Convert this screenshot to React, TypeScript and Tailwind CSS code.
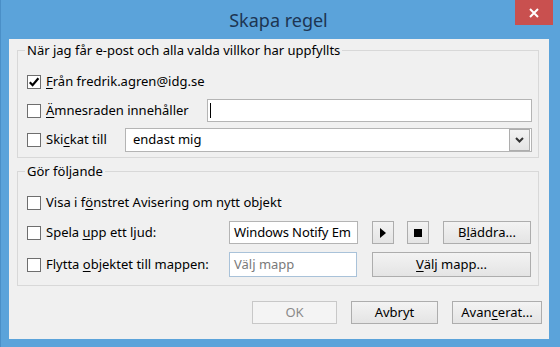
const U = ({ children }: { children: string }) => (
  <span className="underline underline-offset-2 decoration-1">{children}</span>
);

const Check = ({ checked = false }: { checked?: boolean }) => (
  <span className="w-[14px] h-[14px] shrink-0 border border-[#6e6e6e] bg-white flex items-center justify-center">
    {checked && (
      <svg width="12" height="12" viewBox="0 0 12 12">
        <path d="M1.8 6.2 L4.6 9.2 L10.4 2.2" fill="none" stroke="#000" strokeWidth="2.2" />
      </svg>
    )}
  </span>
);

const Button = ({ children, className = "", disabled = false }: { children: React.ReactNode; className?: string; disabled?: boolean }) => (
  <div
    className={
      "flex items-center justify-center border " +
      (disabled
        ? "border-[#c8c8c8] bg-[#f4f4f4] text-[#8a8a8a] "
        : "border-[#adadad] bg-gradient-to-b from-[#f3f3f3] to-[#e4e4e4] text-black ") +
      className
    }
  >
    {children}
  </div>
);

export default function App() {
  return (
    <div className="w-[560px] h-[347px] bg-[#5ba3da] border-l border-[#4a8fc7] flex flex-col font-['Noto_Sans',sans-serif] text-[13px] text-black">
      <div className="h-[39px] relative flex items-center justify-center pr-[4px]">
        <span className="text-[18px] text-[#1d3552] leading-none">Skapa regel</span>
        <div className="absolute right-[7px] top-0 w-[38px] h-[25px] bg-[#c9504f] flex items-center justify-center">
          <svg width="10" height="10" viewBox="0 0 10 10">
            <path d="M1 1 L9 9 M9 1 L1 9" stroke="#fff" strokeWidth="2" />
          </svg>
        </div>
      </div>

      <div className="ml-[8px] w-[540px] h-[300px] bg-[#f0f0f0] flex flex-col pt-[2px]">
        <fieldset className="ml-[8px] mr-[10px] border border-[#d8d8d8] pl-[9px] pr-[6px] pb-[5px]">
          <legend className="px-[2px] -ml-[2px] leading-[18px]">När jag får e-post och alla valda villkor har uppfyllts</legend>
          <div className="flex flex-col gap-[6px] pt-[11px]">
            <div className="h-[23px] flex items-center gap-[5px]">
              <Check checked />
              <span>
                <U>F</U>rån fredrik.agren@idg.se
              </span>
            </div>
            <div className="h-[23px] flex items-center">
              <div className="w-[180px] flex items-center gap-[5px]">
                <Check />
                <span>
                  <U>Ä</U>mnesraden innehåller
                </span>
              </div>
              <div className="flex-1 h-[23px] bg-white border border-[#b4b4b4] flex items-center pl-[2px]">
                <span className="w-px h-[15px] bg-black" />
              </div>
            </div>
            <div className="h-[24px] flex items-center">
              <div className="w-[98px] flex items-center gap-[5px]">
                <Check />
                <span>
                  Ski<U>c</U>kat till
                </span>
              </div>
              <div className="flex-1 h-[24px] bg-white border border-[#b4b4b4] flex items-center pl-[7px] pr-px">
                <span className="flex-1">endast mig</span>
                <div className="w-[21px] h-[22px] border border-[#adadad] bg-gradient-to-b from-[#f3f3f3] to-[#e4e4e4] flex items-center justify-center">
                  <svg width="9" height="6" viewBox="0 0 9 6">
                    <path d="M1 1 L4.5 4.5 L8 1" fill="none" stroke="#333" strokeWidth="2" />
                  </svg>
                </div>
              </div>
            </div>
          </div>
        </fieldset>

        <fieldset className="mt-[4px] ml-[8px] mr-[10px] border border-[#d8d8d8] pl-[9px] pr-[7px] pb-[8px]">
          <legend className="px-[2px] -ml-[2px] leading-[18px]">Gör följande</legend>
          <div className="flex flex-col pt-[11px]">
            <div className="h-[23px] flex items-center gap-[5px]">
              <Check />
              <span>
                Visa i f<U>ö</U>nstret Avisering om nytt objekt
              </span>
            </div>
            <div className="mt-[7px] h-[23px] flex items-center">
              <div className="w-[202px] flex items-center gap-[5px]">
                <Check />
                <span>
                  Spela <U>u</U>pp ett ljud:
                </span>
              </div>
              <div className="w-[129px] h-[23px] bg-white border border-[#b4b4b4] flex items-center pl-[4px] whitespace-nowrap tracking-[-0.1px]">
                Windows Notify Em
              </div>
              <Button className="ml-[14px] w-[22px] h-[23px]">
                <svg width="6" height="10" viewBox="0 0 6 10">
                  <path d="M0 0 L6 5 L0 10 Z" fill="#000" />
                </svg>
              </Button>
              <Button className="ml-[13px] w-[22px] h-[23px]">
                <span className="w-[8px] h-[8px] bg-black" />
              </Button>
              <Button className="ml-[14px] flex-1 h-[23px]">
                <span>
                  B<U>l</U>äddra...
                </span>
              </Button>
            </div>
            <div className="mt-[8px] h-[25px] flex items-center">
              <div className="w-[202px] flex items-center gap-[5px]">
                <Check />
                <span>
                  Flytta <U>o</U>bjektet till mappen:
                </span>
              </div>
              <div className="w-[128px] h-[25px] bg-white border border-[#a9c2d9] flex items-center pl-[4px] text-[#7a7a7a]">
                Välj mapp
              </div>
              <Button className="ml-[15px] flex-1 h-[25px]">
                <span>
                  <U>V</U>älj mapp...
                </span>
              </Button>
            </div>
          </div>
        </fieldset>

        <div className="mt-[15px] flex justify-end gap-[14px] pr-[7px]">
          <Button disabled className="w-[85px] h-[23px]">
            OK
          </Button>
          <Button className="w-[87px] h-[23px]">Avbryt</Button>
          <Button className="w-[90px] h-[23px]">
            <span>
              Avan<U>c</U>erat...
            </span>
          </Button>
        </div>
      </div>
    </div>
  );
}
